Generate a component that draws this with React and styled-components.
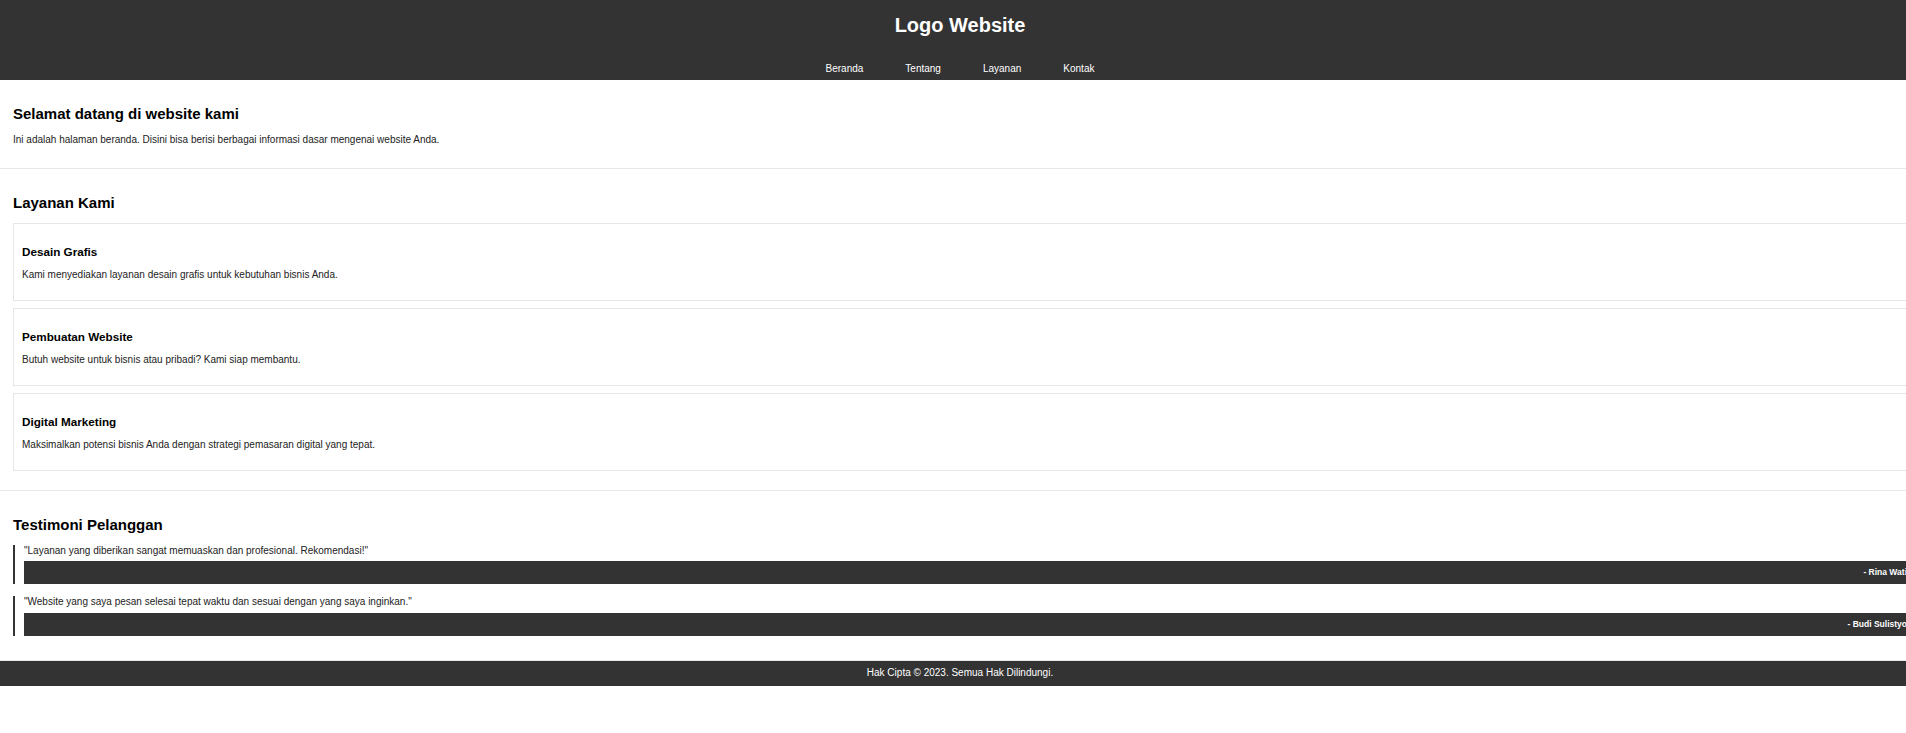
import React from 'react'
import styled, { createGlobalStyle } from 'styled-components'

const GlobalStyle = createGlobalStyle`
    html, body {
        margin: 0;
        padding: 0;
        overflow-x: hidden;
        background: #fff;
    }
    body {
        font-family: "Liberation Sans", Arial, sans-serif;
        font-size: 10px;
        color: #222;
    }
`

const Page = styled.div`
    width: 1920px;
`

const Header = styled.header`
    display: flow-root;
    background-color: #333;
    color: #fff;
    text-align: center;
`

const Logo = styled.h1`
    margin: 14px 0 12px;
    font-size: 20px;
    line-height: 23px;
    font-weight: bold;
`

const Nav = styled.nav`
    display: flex;
    justify-content: center;
    gap: 42px;
    padding: 14px 0 5px;
    line-height: 12px;
`

const NavLink = styled.a`
    color: #fff;
    text-decoration: none;
    font-size: 10px;
`

const Section = styled.section`
    padding: 12px 13px;
    border-bottom: 1px solid #e8e8e8;
`

const Title = styled.h2`
    margin: 13px 0 12px;
    font-size: 15px;
    line-height: 17px;
    font-weight: bold;
    color: #000;
`

const Text = styled.p`
    margin: 0 0 10px;
    font-size: 10px;
    line-height: 11.5px;
`

const Card = styled.div`
    border: 1px solid #e6e6e6;
    padding: 10px 8px;
    margin-bottom: 7px;
`

const CardTitle = styled.h3`
    margin: 11px 0;
    font-size: 11.7px;
    line-height: 13.5px;
    font-weight: bold;
    color: #000;
`

const CardText = styled(Text)`
    margin-bottom: 9px;
`

const Quote = styled.blockquote`
    margin: 0 0 12px;
    padding-left: 9px;
    border-left: 2px solid #333;
`

const QuoteText = styled.p`
    margin: 0 0 5px;
    font-size: 10px;
    line-height: 11.5px;
`

const Author = styled.div`
    background-color: #333;
    color: #fff;
    font-size: 8.5px;
    font-weight: bold;
    line-height: 9px;
    padding: 7px 0 7px 10px;
    text-align: right;
`

const Footer = styled.footer`
    background-color: #333;
    color: #fff;
    text-align: center;
    font-size: 10px;
    line-height: 12px;
    padding: 6px 0 7px;
`

const services = [
    { title: 'Desain Grafis', text: 'Kami menyediakan layanan desain grafis untuk kebutuhan bisnis Anda.' },
    { title: 'Pembuatan Website', text: 'Butuh website untuk bisnis atau pribadi? Kami siap membantu.' },
    { title: 'Digital Marketing', text: 'Maksimalkan potensi bisnis Anda dengan strategi pemasaran digital yang tepat.' },
]

const testimonials = [
    { quote: '"Layanan yang diberikan sangat memuaskan dan profesional. Rekomendasi!"', author: '- Rina Wati' },
    { quote: '"Website yang saya pesan selesai tepat waktu dan sesuai dengan yang saya inginkan."', author: '- Budi Sulistyo' },
]

const App = () => (
    <Page>
        <GlobalStyle />
        <Header>
            <Logo>Logo Website</Logo>
            <Nav>
                <NavLink href="#">Beranda</NavLink>
                <NavLink href="#">Tentang</NavLink>
                <NavLink href="#">Layanan</NavLink>
                <NavLink href="#">Kontak</NavLink>
            </Nav>
        </Header>

        <Section>
            <Title>Selamat datang di website kami</Title>
            <Text>Ini adalah halaman beranda. Disini bisa berisi berbagai informasi dasar mengenai website Anda.</Text>
        </Section>

        <Section>
            <Title>Layanan Kami</Title>
            {services.map((s) => (
                <Card key={s.title}>
                    <CardTitle>{s.title}</CardTitle>
                    <CardText>{s.text}</CardText>
                </Card>
            ))}
        </Section>

        <Section>
            <Title>Testimoni Pelanggan</Title>
            {testimonials.map((t) => (
                <Quote key={t.author}>
                    <QuoteText>{t.quote}</QuoteText>
                    <Author>{t.author}</Author>
                </Quote>
            ))}
        </Section>

        <Footer>Hak Cipta © 2023. Semua Hak Dilindungi.</Footer>
    </Page>
)

export default App
